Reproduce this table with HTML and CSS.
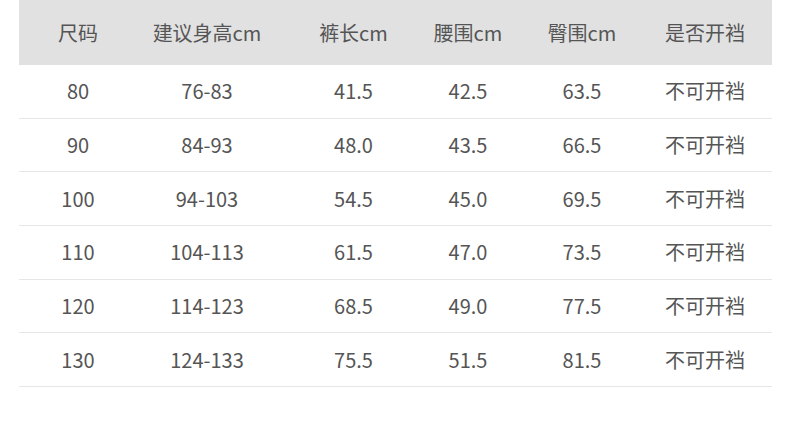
FILE: index.html
```html
<!DOCTYPE html>
<html lang="zh">
<head>
<meta charset="utf-8">
<link rel="stylesheet" href="styles.css">
</head>
<body>
<div class="table">
  <div class="row head">
    <div>尺码</div><div>建议身高cm</div><div>裤长cm</div><div>腰围cm</div><div>臀围cm</div><div>是否开裆</div>
  </div>
  <div class="row"><div>80</div><div>76-83</div><div>41.5</div><div>42.5</div><div>63.5</div><div>不可开裆</div></div>
  <div class="row"><div>90</div><div>84-93</div><div>48.0</div><div>43.5</div><div>66.5</div><div>不可开裆</div></div>
  <div class="row"><div>100</div><div>94-103</div><div>54.5</div><div>45.0</div><div>69.5</div><div>不可开裆</div></div>
  <div class="row"><div>110</div><div>104-113</div><div>61.5</div><div>47.0</div><div>73.5</div><div>不可开裆</div></div>
  <div class="row"><div>120</div><div>114-123</div><div>68.5</div><div>49.0</div><div>77.5</div><div>不可开裆</div></div>
  <div class="row"><div>130</div><div>124-133</div><div>75.5</div><div>51.5</div><div>81.5</div><div>不可开裆</div></div>
</div>
</body>
</html>
```
FILE: styles.css
```css
html, body {
  margin: 0;
  padding: 0;
  background: #ffffff;
}
body {
  font-family: "Noto Sans CJK SC", "Noto Sans", sans-serif;
  color: #555555;
  font-size: 20px;
}
.table {
  width: 753px;
  margin-left: 19px;
}
.row {
  display: grid;
  grid-template-columns: 118px 140px 153px 76px 152px 94px 20px;
  height: 53.67px;
  align-items: center;
  border-bottom: 1px solid #e6e6e6;
  box-sizing: border-box;
}
.row > div {
  text-align: center;
  line-height: 1;
  white-space: nowrap;
  display: flex;
  justify-content: center;
}
.row.head {
  height: 65px;
  background: #e1e1e1;
  border-bottom: none;
}
```
